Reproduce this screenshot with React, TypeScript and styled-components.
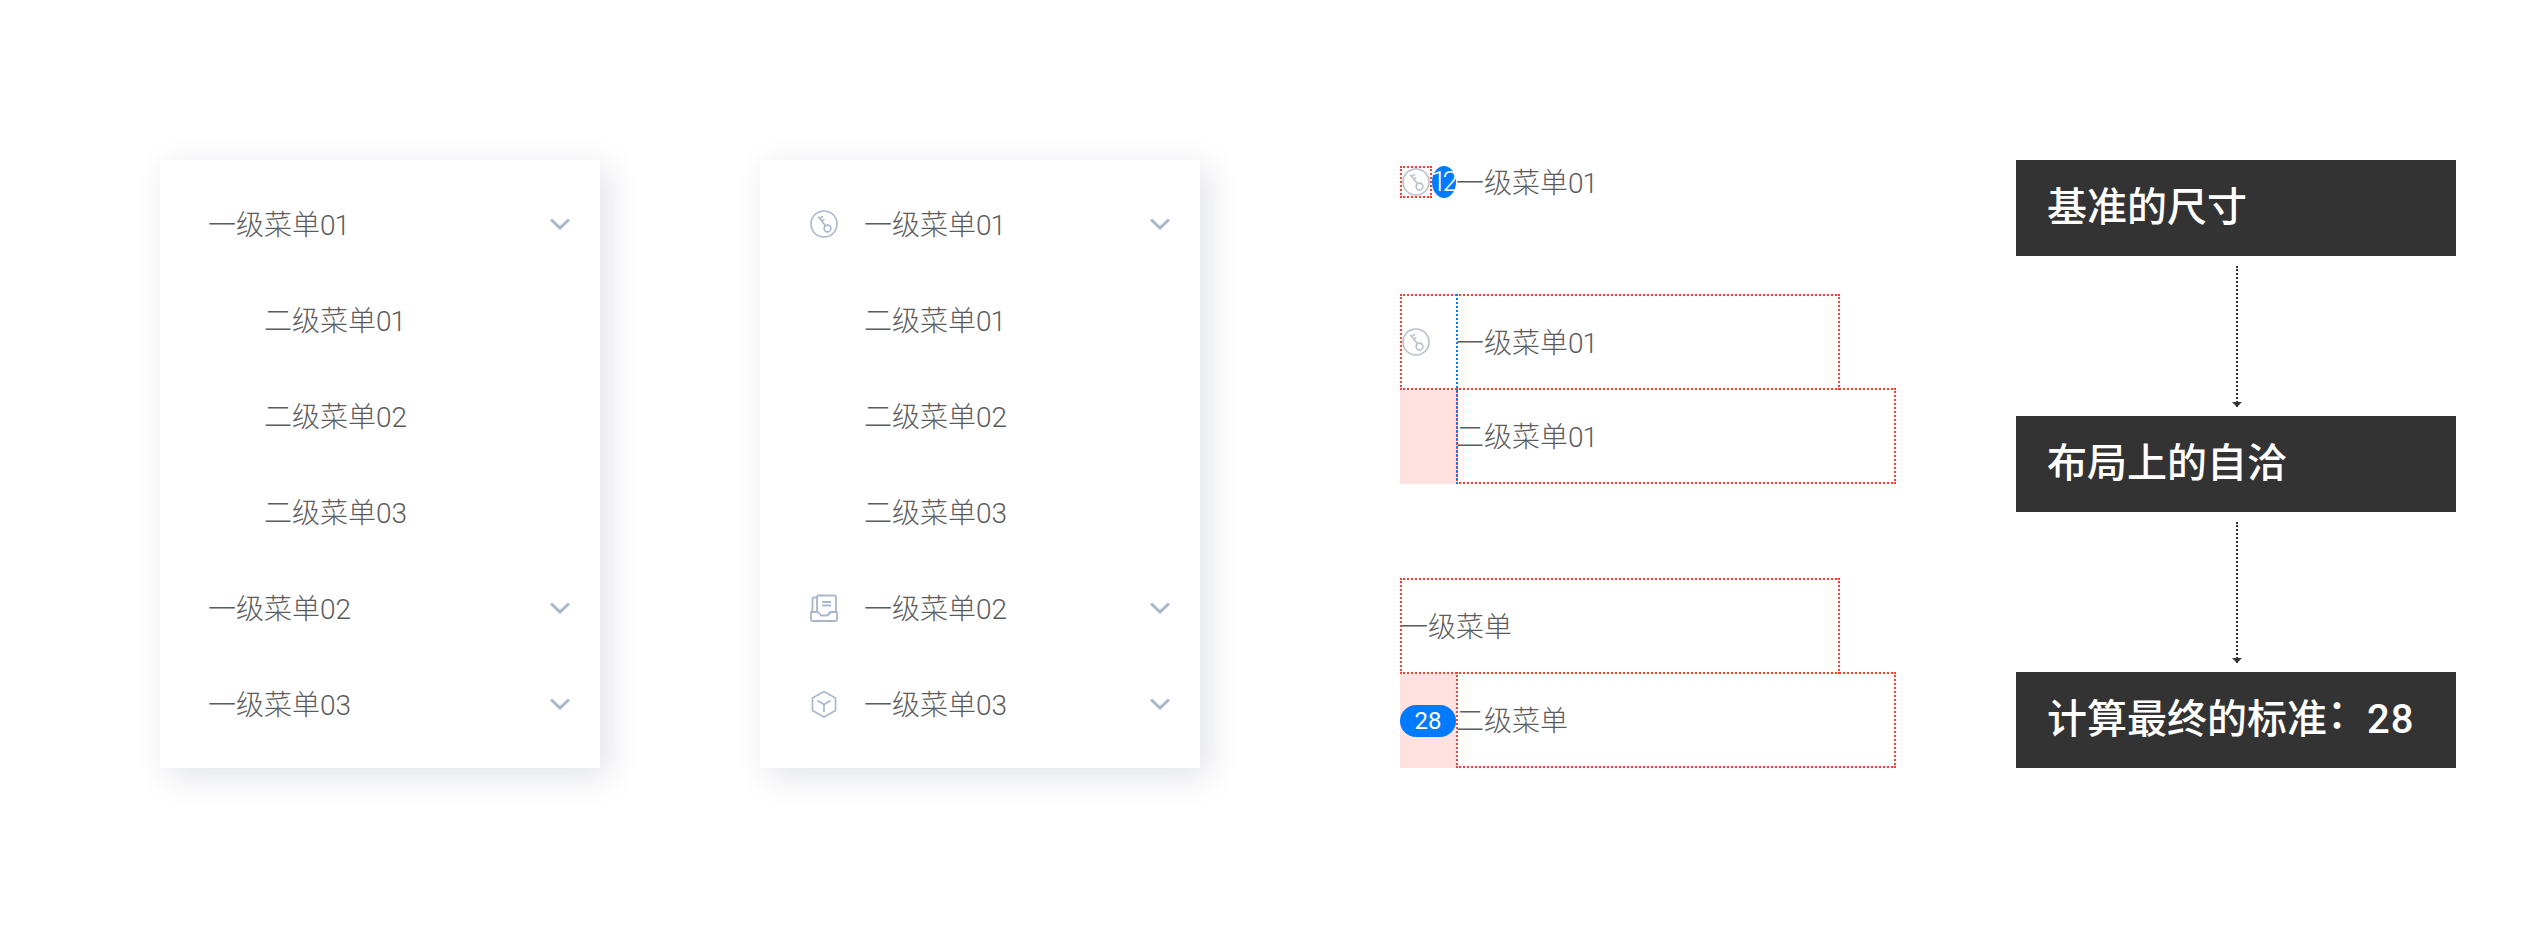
import React from 'react';
import styled, { createGlobalStyle } from 'styled-components';

const GlobalStyle = createGlobalStyle`
  html, body {
    margin: 0;
    padding: 0;
    background: #fff;
  }
  body {
    font-family: Roboto, "Noto Sans CJK SC", sans-serif;
  }
`;

const ICON_COLOR = '#a9b7cb';
const RED = '#ff3b30';
const BLUE = '#007aff';

const KeyIcon: React.FC<{ color?: string }> = ({ color = ICON_COLOR }) => (
  <svg width="28" height="28" viewBox="0 0 28 28" fill="none" stroke={color} strokeWidth="1.6">
    <circle cx="14" cy="14" r="13" />
    <circle cx="17.500" cy="18.500" r="3.400" />
    <path d="M15.500 15.700L8.300 6.700M9.800 8.600l3.200-2.400M11.900 11.200l2.400-1.800" />
  </svg>
);

const InboxIcon: React.FC = () => (
  <svg width="28" height="28" viewBox="0 0 28 28" fill="none" stroke={ICON_COLOR} strokeWidth="1.8" strokeLinejoin="round">
    <path d="M7 17V3a1.500 1.500 0 0 1 1.500-1.500h16A1.500 1.500 0 0 1 26 3v15h-5l-3 3.500" />
    <path d="M7 3.500H4A1.500 1.500 0 0 0 2.500 5v13" />
    <path d="M1 18h7l3 3.500h6L20 18h7v7.500a1.500 1.500 0 0 1-1.500 1.500h-23A1.500 1.500 0 0 1 1 25.500z" />
    <path d="M12 8h9M12 11.500h9" />
  </svg>
);

const CubeIcon: React.FC = () => (
  <svg width="28" height="28" viewBox="0 0 28 28" fill="none" stroke={ICON_COLOR} strokeWidth="1.7" strokeLinejoin="round">
    <path d="M14 1.500L25.500 8v12.500L14 27 2.500 20.500V8z" />
    <path d="M7.500 10.500L14 14.500l6.500-4M14 14.500V22" />
  </svg>
);

const Chevron: React.FC = () => (
  <ChevronSvg width="20" height="12" viewBox="0 0 20 12" fill="none" stroke={ICON_COLOR} strokeWidth="3">
    <path d="M1 1.500l9 8.500 9-8.500" />
  </ChevronSvg>
);

const level2 = ['01', '02', '03'];

const App: React.FC = () => (
  <Page>
    <GlobalStyle />

    <MenuCard>
      <MenuRow $inset={48}>
        <MenuText>一级菜单<Num $tight>01</Num></MenuText>
        <Chevron />
      </MenuRow>
      {level2.map(num => (
        <MenuRow key={num} $inset={104}>
          <MenuText>二级菜单<Num $tight={num === '01'}>{num}</Num></MenuText>
        </MenuRow>
      ))}
      <MenuRow $inset={48}>
        <MenuText>一级菜单<Num>02</Num></MenuText>
        <Chevron />
      </MenuRow>
      <MenuRow $inset={48}>
        <MenuText>一级菜单<Num>03</Num></MenuText>
        <Chevron />
      </MenuRow>
    </MenuCard>

    <MenuCard $left={160}>
      <MenuRow $inset={50}>
        <IconSlot><KeyIcon /></IconSlot>
        <MenuText>一级菜单<Num $tight>01</Num></MenuText>
        <Chevron />
      </MenuRow>
      {level2.map(num => (
        <MenuRow key={num} $inset={104}>
          <MenuText>二级菜单<Num $tight={num === '01'}>{num}</Num></MenuText>
        </MenuRow>
      ))}
      <MenuRow $inset={50}>
        <IconSlot><InboxIcon /></IconSlot>
        <MenuText>一级菜单<Num>02</Num></MenuText>
        <Chevron />
      </MenuRow>
      <MenuRow $inset={50}>
        <IconSlot><CubeIcon /></IconSlot>
        <MenuText>一级菜单<Num>03</Num></MenuText>
        <Chevron />
      </MenuRow>
    </MenuCard>

    <Anatomy>
      <SmallRow>
        <IconBox><KeyIcon color="#b9c0cb" /></IconBox>
        <NarrowBadge>12</NarrowBadge>
        <MenuText>一级菜单<Num $tight>01</Num></MenuText>
      </SmallRow>

      <Diagram $top={96}>
        <GuideLine />
        <OutlineRow>
          <KeyIcon color="#b9c0cb" />
          <RowLabel $indent={26}>一级菜单<Num $tight>01</Num></RowLabel>
        </OutlineRow>
        <SubRow>
          <Gutter />
          <SubBox>
            <RowLabel $indent={-2}>二级菜单<Num $tight>01</Num></RowLabel>
          </SubBox>
        </SubRow>
      </Diagram>

      <Diagram $top={94}>
        <OutlineRow>
          <RowLabel $indent={-2}>一级菜单</RowLabel>
        </OutlineRow>
        <SubRow>
          <Gutter>
            <WideBadge>28</WideBadge>
          </Gutter>
          <SubBox>
            <RowLabel $indent={-2}>二级菜单</RowLabel>
          </SubBox>
        </SubRow>
      </Diagram>
    </Anatomy>

    <Flow>
      <StepBox>基准的尺寸</StepBox>
      <Arrow />
      <StepBox>布局上的自洽</StepBox>
      <Arrow />
      <StepBox>计算最终的标准<Colon>：</Colon><StepNum>28</StepNum></StepBox>
    </Flow>
  </Page>
);

const Page = styled.div`
  display: flex;
  align-items: flex-start;
  box-sizing: border-box;
  width: 2534px;
  height: 928px;
  padding: 160px 0 0 160px;
  background: #fff;
  overflow: hidden;
`;

const MenuCard = styled.div<{ $left?: number }>`
  flex: none;
  box-sizing: border-box;
  width: 440px;
  height: 608px;
  margin-left: ${({ $left }) => $left ?? 0}px;
  padding: 16px 0;
  background: #fff;
  box-shadow: 8px 8px 32px rgba(40, 50, 90, 0.14);
`;

const MenuRow = styled.div<{ $inset: number }>`
  display: flex;
  align-items: center;
  height: 96px;
  padding: 0 30px 0 ${({ $inset }) => $inset}px;
`;

const MenuText = styled.span`
  flex: 1;
  padding-top: 3px;
  font-size: 28px;
  font-weight: 300;
  line-height: 32px;
  color: #5c5c5c;
  white-space: nowrap;
`;

const Num = styled.span<{ $tight?: boolean }>`
  letter-spacing: ${({ $tight }) => ($tight ? '-1px' : '0')};
`;

const ChevronSvg = styled.svg`
  flex: none;
`;

const IconSlot = styled.span`
  display: flex;
  flex: none;
  width: 54px;
`;

const Anatomy = styled.div`
  flex: none;
  width: 496px;
  margin-left: 200px;
  padding-top: 6px;
`;

const SmallRow = styled.div`
  display: flex;
  align-items: center;
  height: 32px;
`;

const IconBox = styled.div`
  display: flex;
  align-items: center;
  justify-content: center;
  flex: none;
  box-sizing: border-box;
  width: 32px;
  height: 32px;
  border: 2px dotted ${RED};

  svg {
    flex: none;
  }
`;

const NarrowBadge = styled.div`
  flex: none;
  width: 24px;
  height: 32px;
  border-radius: 12px / 16px;
  font-size: 28px;
  font-weight: 300;
  line-height: 32px;
  letter-spacing: -4px;
  text-indent: -1px;
  white-space: nowrap;
  color: #fff;
  background: ${BLUE};
`;

const Diagram = styled.div<{ $top: number }>`
  position: relative;
  margin-top: ${({ $top }) => $top}px;
`;

const GuideLine = styled.div`
  position: absolute;
  top: 0;
  bottom: 0;
  left: 56px;
  border-left: 2px dotted ${BLUE};
  z-index: 1;
`;

const OutlineRow = styled.div`
  display: flex;
  align-items: center;
  box-sizing: border-box;
  width: 440px;
  height: 96px;
  border: 2px dotted ${RED};
  margin-bottom: -2px;

  > svg {
    flex: none;
  }
`;

const RowLabel = styled(MenuText)<{ $indent: number }>`
  margin-left: ${({ $indent }) => $indent}px;
`;

const SubRow = styled.div`
  display: flex;
  height: 96px;
`;

const Gutter = styled.div`
  display: flex;
  align-items: center;
  flex: none;
  width: 56px;
  margin-top: 2px;
  background: #ffe2df;
`;

const SubBox = styled.div`
  display: flex;
  align-items: center;
  box-sizing: border-box;
  width: 440px;
  border: 2px dotted ${RED};
`;

const WideBadge = styled.div`
  width: 56px;
  height: 32px;
  border-radius: 16px;
  font-size: 24px;
  line-height: 32px;
  text-align: center;
  color: #fff;
  background: ${BLUE};
`;

const Flow = styled.div`
  display: flex;
  flex-direction: column;
  flex: none;
  width: 440px;
  margin-left: 120px;
`;

const StepBox = styled.div`
  box-sizing: border-box;
  height: 96px;
  padding-left: 31px;
  font-size: 40px;
  font-weight: 500;
  line-height: 96px;
  color: #fff;
  background: #333;
`;

const Colon = styled.span`
  position: relative;
  top: -5px;
`;

const StepNum = styled.span`
  letter-spacing: 1px;
`;

const Arrow = styled.div`
  position: relative;
  align-self: center;
  box-sizing: border-box;
  width: 2px;
  height: 141px;
  margin: 10px 0 9px 2px;
  border-left: 2px dotted #333;

  &::after {
    content: '';
    position: absolute;
    bottom: 0;
    left: -6px;
    border-top: 5px solid #333;
    border-left: 5px solid transparent;
    border-right: 5px solid transparent;
  }
`;

export default App;
